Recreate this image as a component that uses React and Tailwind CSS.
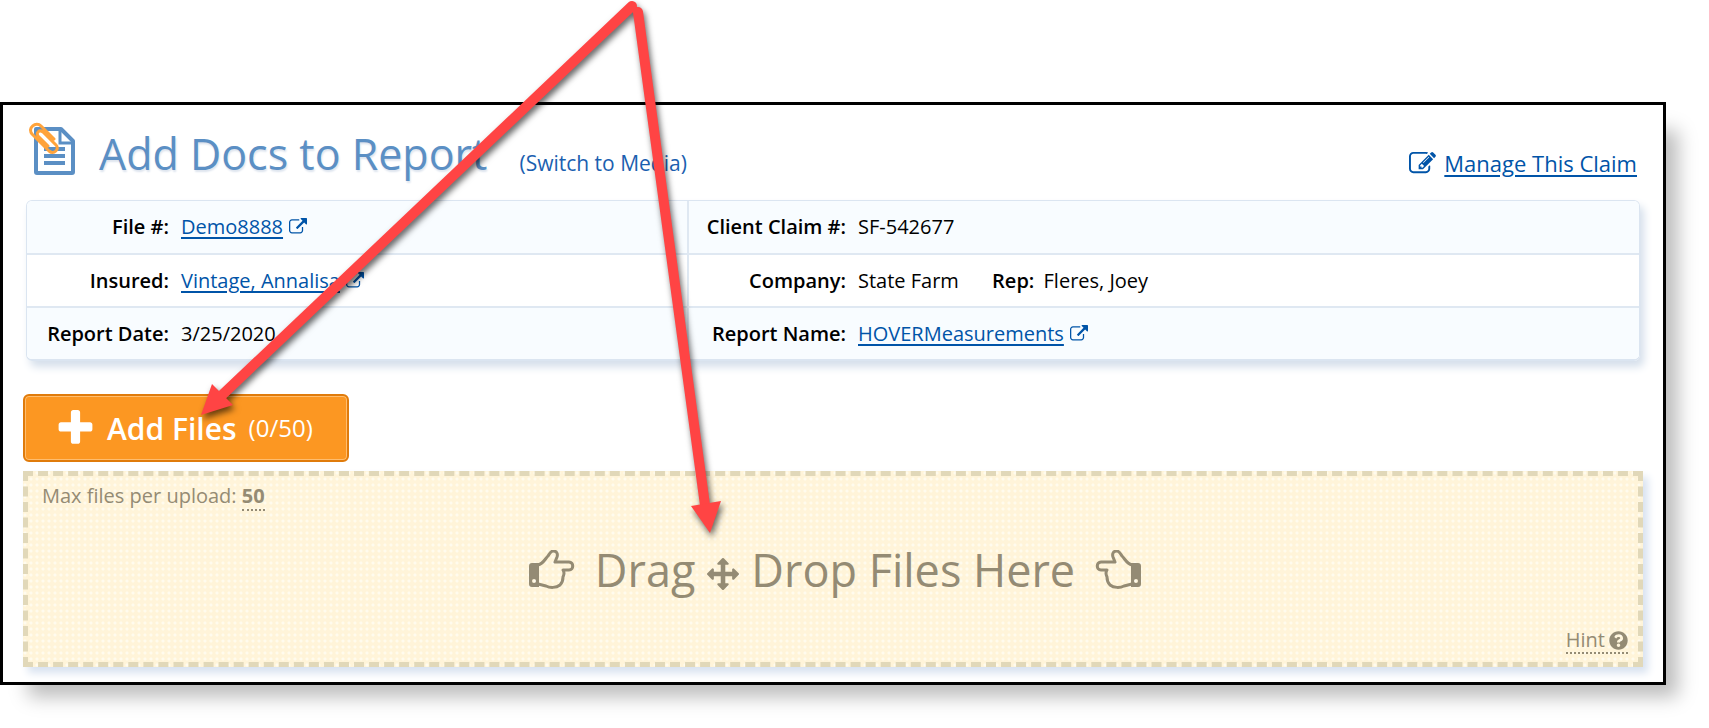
import React from 'react';
import { FaQuestionCircle } from 'react-icons/fa';

const Glyph = ({ d, size, className = '' }) => (
  <svg width={size} height={size} viewBox="0 0 1792 1792" fill="currentColor" className={className} aria-hidden="true">
    <path d={d} />
  </svg>
);

const EXTERNAL =
  'M1408 928v320q0 119-84.5 203.5t-203.5 84.5h-832q-119 0-203.5-84.5t-84.5-203.5v-832q0-119 84.5-203.5t203.5-84.5h704q14 0 23 9t9 23v64q0 14-9 23t-23 9h-704q-66 0-113 47t-47 113v832q0 66 47 113t113 47h832q66 0 113-47t47-113v-320q0-14 9-23t23-9h64q14 0 23 9t9 23zm384-864v512q0 26-19 45t-45 19-45-19l-176-176-652 652q-10 10-23 10t-23-10l-114-114q-10-10-10-23t10-23l652-652-176-176q-19-19-19-45t19-45 45-19h512q26 0 45 19t19 45z';
const EDIT =
  'M888 1184l116-116-152-152-116 116v56h96v96h56zm440-720q-16-16-33 1l-350 350q-17 17-1 33t33-1l350-350q17-17 1-33zm80 594v190q0 119-84.5 203.5t-203.5 84.5h-832q-119 0-203.5-84.5t-84.5-203.5v-832q0-119 84.5-203.5t203.5-84.5h832q63 0 117 25 15 7 18 23 3 17-9 29l-49 49q-14 14-32 8-23-6-45-6h-832q-66 0-113 47t-47 113v832q0 66 47 113t113 47h832q66 0 113-47t47-113v-126q0-13 9-22l64-64q15-15 35-7t20 29zm-96-738l288 288-672 672h-288v-288zm444 132l-92 92-288-288 92-92q28-28 68-28t68 28l152 152q28 28 28 68t-28 68z';
const PLUS =
  'M1600 736v192q0 40-28 68t-68 28h-416v416q0 40-28 68t-68 28h-192q-40 0-68-28t-28-68v-416h-416q-40 0-68-28t-28-68v-192q0-40 28-68t68-28h416v-416q0-40 28-68t68-28h192q40 0 68 28t28 68v416h416q40 0 68 28t28 68z';
const MOVE =
  'M1792 896q0 26-19 45l-256 256q-19 19-45 19t-45-19-19-45v-128h-384v384h128q26 0 45 19t19 45-19 45l-256 256q-19 19-45 19t-45-19l-256-256q-19-19-19-45t19-45 45-19h128v-384h-384v128q0 26-19 45t-45 19-45-19l-256-256q-19-19-19-45t19-45l256-256q19-19 45-19t45 19 19 45v128h384v-384h-128q-26 0-45-19t-19-45 19-45l256-256q19-19 45-19t45 19l256 256q19 19 19 45t-19 45-45 19h-128v384h384v-128q0-26 19-45t45-19 45 19l256 256q19 19 19 45z';

const DocIcon = () => (
  <svg width="48" height="56" viewBox="0 0 48 56" fill="none" aria-hidden="true" className="shrink-0">
    <path d="M7 8h25l12 12v31a1 1 0 0 1-1 1H8a1 1 0 0 1-1-1z" stroke="#5b8fc4" strokeWidth="4" strokeLinejoin="round" />
    <path d="M31 8v14h13" stroke="#5b8fc4" strokeWidth="3" />
    <path d="M15 28h21M15 35h21M15 42h21" stroke="#5b8fc4" strokeWidth="4" />
    <path
      d="M25 18 12 5C7 0-2 7 3 13l17 17c5 4 11-2 7-6L14 11c-4-3-7 1-5 4l10 10"
      stroke="#ffa33b"
      strokeWidth="3"
      strokeLinecap="round"
      strokeLinejoin="round"
    />
  </svg>
);

const Hand = ({ className = '' }) => (
  <svg width="46" height="40" viewBox="0 0 46 40" fill="none" className={className} aria-hidden="true">
    <path
      d="M9 15c5-1 7-6 10-9 2-3 3-5 5-5 4 0 5 3 4 6l-2 5h14c5 0 5 8 0 8h-6c2 3 1 5 0 7 0 4-1 6-3 8-4 3-10 3-14 1l-8-2"
      stroke="currentColor"
      strokeWidth="3"
      strokeLinejoin="round"
    />
    <path fillRule="evenodd" d="M3 13h7v24H3a3 3 0 0 1-3-3V16a3 3 0 0 1 3-3zm2 16a2 2 0 1 0 0 4 2 2 0 0 0 0-4z" fill="currentColor" />
  </svg>
);

const ExtLink = ({ children }) => (
  <a href="#" className="inline-flex items-center gap-1.5 text-[#0054a8]">
    <span className="underline underline-offset-3">{children}</span>
    <Glyph d={EXTERNAL} size={18} />
  </a>
);

const rows = [
  {
    label: 'File #:',
    value: <ExtLink>Demo8888</ExtLink>,
    label2: 'Client Claim #:',
    value2: 'SF-542677',
  },
  {
    label: 'Insured:',
    value: <ExtLink>Vintage, Annalisa</ExtLink>,
    label2: 'Company:',
    value2: (
      <>
        State Farm <b className="ml-7 mr-1 font-semibold">Rep:</b> Fleres, Joey
      </>
    ),
  },
  {
    label: 'Report Date:',
    value: '3/25/2020',
    label2: 'Report Name:',
    value2: <ExtLink>HOVERMeasurements</ExtLink>,
  },
];

const ClaimTable = () => (
  <div className="mx-[3px] overflow-hidden rounded-md border border-b-2 border-[#dbe5f1] shadow-[4px_6px_8px_#d5dfeb]">
    <table className="w-full border-collapse text-xl leading-7">
      <tbody>
        {rows.map((row) => (
          <tr key={row.label} className="h-[53px] border-b-2 border-[#dfe8f2] last:h-[52px] last:border-b-0 odd:bg-[#f8fcff]">
            <th className="w-[148px] pr-1.5 text-right font-semibold whitespace-nowrap">{row.label}</th>
            <td className="w-[513px] border-r-2 border-[#dfe8f2] pl-1.5">{row.value}</td>
            <th className="w-[164px] pr-1.5 text-right font-semibold whitespace-nowrap">{row.label2}</th>
            <td className="pl-1.5">{row.value2}</td>
          </tr>
        ))}
      </tbody>
    </table>
  </div>
);

const DropZone = () => (
  <section className="mt-[9px] flex h-[196px] flex-col justify-between border-5 border-dashed border-[#e1d8b9] bg-[#fff4d9] bg-[radial-gradient(circle,#fffbee_1px,transparent_2px)] bg-size-[6px_6px] pt-1 pr-2.5 pb-2 pl-3.5 text-[#948b74] shadow-[5px_6px_8px_#d8e2f0]">
    <p className="text-xl leading-8">
      Max files per upload: <b className="border-b-2 border-dotted border-[#948b74] font-bold">50</b>
    </p>
    <div className="flex items-center justify-center text-[45px] leading-[60px]">
      <Hand className="mr-5" />
      <span>Drag</span>
      <Glyph d={MOVE} size={32} className="mx-3 mt-2" />
      <span>Drop Files Here</span>
      <Hand className="ml-5 -scale-x-100" />
    </div>
    <div className="flex justify-end text-xl leading-6">
      <button type="button" className="flex items-center gap-1 border-b-2 border-dotted border-[#948b74]">
        Hint <FaQuestionCircle size={19} />
      </button>
    </div>
  </section>
);

const Arrows = () => (
  <svg
    width="740"
    height="560"
    viewBox="0 0 740 560"
    className="pointer-events-none absolute top-0 left-0 drop-shadow-[2px_4px_3px_rgba(0,0,0,0.6)]"
    fill="#ff4444"
    stroke="#ff4444"
    aria-hidden="true"
  >
    <path d="M632 6 220 397M638 12l67 493" strokeWidth="10" strokeLinecap="round" />
    <path d="M201 415l11-31 21 21zM710 533l-19-27 30-5z" stroke="none" />
  </svg>
);

const App = () => {
  return (
    <div className="relative bg-white pt-[102px] pb-11 font-['Open_Sans','Liberation_Sans',sans-serif] text-black">
      <main className="mr-[43px] border-3 border-black bg-white px-5 pt-4 pb-[15px] shadow-[20px_20px_18px_-8px_#bdbdbd]">
        <header className="flex h-[79px] items-start justify-between px-1.5">
          <div className="flex items-start">
            <DocIcon />
            <h1 className="ml-[22px] text-[43px] leading-[66px] text-[#5b8fc4] text-shadow-[1px_2px_2px_#dde4ee]">Add Docs to Report</h1>
            <a href="#" className="mt-[26px] ml-8 text-[21px] leading-8 text-[#1b5fb0]">
              (Switch to Media)
            </a>
          </div>
          <a href="#" className="mt-[26px] flex items-center gap-2 text-[22px] leading-8 font-medium text-[#0054a8]">
            <Glyph d={EDIT} size={27} />
            <span className="underline decoration-2 underline-offset-3">Manage This Claim</span>
          </a>
        </header>

        <ClaimTable />

        <button
          type="button"
          className="mt-[33px] flex h-[68px] items-center rounded-md border-2 border-[#e07b0b] bg-[#fc9722] pr-[34px] pl-[29px] text-white inset-ring-1 inset-ring-[#ffbd6e]"
        >
          <Glyph d={PLUS} size={43} />
          <span className="ml-2.5 text-[30px] font-semibold">Add Files</span>
          <span className="ml-3 text-2xl">(0/50)</span>
        </button>

        <DropZone />
      </main>
      <Arrows />
    </div>
  );
};

export default App;
